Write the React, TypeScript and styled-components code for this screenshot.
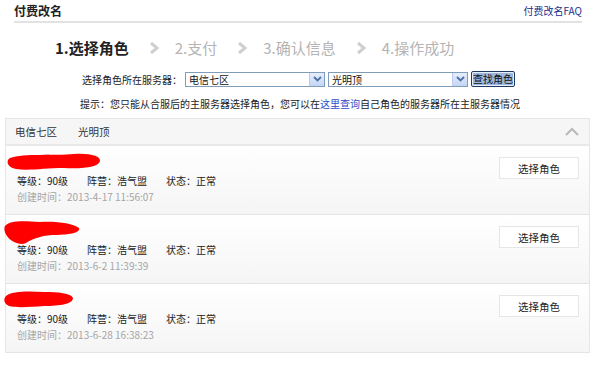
import * as React from "react";
import styled, { createGlobalStyle } from "styled-components";

const GlobalStyle = createGlobalStyle`
    body {
        margin: 0;
        background: #fff;
        font-family: "Noto Sans CJK SC", "Liberation Sans", sans-serif;
        font-size: 10px;
        color: #333;
    }
`;

interface Role {
    mask: string;
    maskWidth: number;
    maskHeight: number;
    level: string;
    camp: string;
    status: string;
    created: string;
}

const roles: Role[] = [
    {
        mask: "M6 7 C20 2 50 5 70 3 C86 2 97 5 96 10 C95 16 80 18 60 17 C40 17 25 20 12 18 C4 17 1 10 6 7 Z",
        maskWidth: 100,
        maskHeight: 22,
        level: "90级",
        camp: "浩气盟",
        status: "正常",
        created: "2013-4-17 11:56:07",
    },
    {
        mask: "M1 6 C6 0 20 1 36 2 C52 1 68 3 75 8 C77 13 64 15 48 15 C36 16 28 19 22 23 C16 26 6 21 3 16 C0 12 0 8 1 6 Z",
        maskWidth: 80,
        maskHeight: 26,
        level: "90级",
        camp: "浩气盟",
        status: "正常",
        created: "2013-6-2 11:39:39",
    },
    {
        mask: "M2 7 C8 2 24 2 40 3 C54 3 67 4 69 9 C69 15 56 17 40 17 C26 18 12 19 5 17 C0 15 -1 10 2 7 Z",
        maskWidth: 72,
        maskHeight: 22,
        level: "90级",
        camp: "浩气盟",
        status: "正常",
        created: "2013-6-28 16:38:23",
    },
];

const steps = ["1.选择角色", "2.支付", "3.确认信息", "4.操作成功"];

const DownArrow = () => (
    <svg width="9" height="6" viewBox="0 0 9 6">
        <polyline
            points="1,1 4.5,4.5 8,1"
            fill="none"
            stroke="#4d6fa8"
            strokeWidth="1.8"
        />
    </svg>
);

const App: React.FC = () => {
    return (
        <>
            <GlobalStyle />
            <Page>
                <TopBar>
                    <Title>付费改名</Title>
                    <FaqLink href="#">付费改名FAQ</FaqLink>
                </TopBar>

                <Steps>
                    {steps.map((s, i) => (
                        <React.Fragment key={s}>
                            {i > 0 && (
                                <StepArrow viewBox="0 0 10 14">
                                    <polyline
                                        points="2,2 8,7 2,12"
                                        fill="none"
                                        stroke="#cfcfcf"
                                        strokeWidth="3"
                                    />
                                </StepArrow>
                            )}
                            <Step $active={i === 0}>{s}</Step>
                        </React.Fragment>
                    ))}
                </Steps>

                <ServerRow>
                    <FieldLabel>选择角色所在服务器：</FieldLabel>
                    <SelectBox>
                        <span>电信七区</span>
                        <SelectArrow>
                            <DownArrow />
                        </SelectArrow>
                    </SelectBox>
                    <SelectBox>
                        <span>光明顶</span>
                        <SelectArrow>
                            <DownArrow />
                        </SelectArrow>
                    </SelectBox>
                    <FindButton>
                        <span>查找角色</span>
                    </FindButton>
                </ServerRow>

                <Hint>
                    提示：您只能从合服后的主服务器选择角色，您可以在
                    <a href="#">这里查询</a>
                    自己角色的服务器所在主服务器情况
                </Hint>

                <Panel>
                    <PanelHead>
                        <HeadText>
                            <span>电信七区</span>
                            <span>光明顶</span>
                        </HeadText>
                        <svg width="16" height="10" viewBox="0 0 16 10">
                            <polyline
                                points="2,8 8,2 14,8"
                                fill="none"
                                stroke="#b8b8b8"
                                strokeWidth="2"
                            />
                        </svg>
                    </PanelHead>
                    {roles.map((r) => (
                        <RoleRow key={r.created}>
                            <RoleInfo>
                                <NameMask>
                                    <svg
                                        width={r.maskWidth}
                                        height={r.maskHeight}
                                        viewBox={`0 0 ${r.maskWidth} ${r.maskHeight}`}
                                    >
                                        <path d={r.mask} fill="#ff0000" />
                                    </svg>
                                </NameMask>
                                <InfoLine>
                                    <span>等级：{r.level}</span>
                                    <span>阵营：{r.camp}</span>
                                    <span>状态：{r.status}</span>
                                </InfoLine>
                                <TimeLine>创建时间：{r.created}</TimeLine>
                            </RoleInfo>
                            <PickButton>选择角色</PickButton>
                        </RoleRow>
                    ))}
                </Panel>
            </Page>
        </>
    );
};

const Page = styled.div`
    width: 600px;
    height: 387px;
    overflow: hidden;
    box-sizing: border-box;
`;

const TopBar = styled.div`
    display: flex;
    justify-content: space-between;
    align-items: center;
    margin: 0 18px 0 14px;
    height: 21px;
    border-bottom: 2px solid #e2e2e2;
`;

const Title = styled.div`
    font-size: 12px;
    font-weight: bold;
    color: #222;
`;

const FaqLink = styled.a`
    font-size: 10px;
    color: #1a2f8c;
    text-decoration: none;
`;

const Steps = styled.div`
    display: flex;
    align-items: center;
    padding-left: 55px;
    margin-top: 13px;
    height: 24px;
`;

const Step = styled.div<{ $active?: boolean }>`
    font-size: 15px;
    line-height: 24px;
    font-weight: ${(p) => (p.$active ? "bold" : "normal")};
    color: ${(p) => (p.$active ? "#222" : "#b4b4b4")};
`;

const StepArrow = styled.svg`
    width: 10px;
    height: 14px;
    margin: 0 16px 0 20px;
`;

const ServerRow = styled.div`
    display: flex;
    align-items: center;
    padding-left: 82px;
    margin-top: 11px;
    height: 16px;
`;

const FieldLabel = styled.span`
    margin-right: 3px;
    color: #222;
`;

const SelectBox = styled.div`
    display: flex;
    justify-content: space-between;
    align-items: center;
    width: 140px;
    height: 15px;
    box-sizing: border-box;
    border: 1px solid #7f9db9;
    background: #fff;
    margin-right: 3px;
    padding-left: 3px;
    color: #111;
    line-height: 13px;
`;

const SelectArrow = styled.div`
    width: 14px;
    height: 13px;
    display: flex;
    align-items: center;
    justify-content: center;
    background: linear-gradient(#e6eefc, #c4d6f5);
    border-left: 1px solid #b8cbeb;
`;

const FindButton = styled.div`
    width: 44px;
    height: 16px;
    box-sizing: border-box;
    border: 1px solid #1e3a62;
    border-radius: 2px;
    background: #e8eef7;
    display: flex;
    align-items: center;
    justify-content: center;
    span {
        background: #9cb6dc;
        color: #111;
        line-height: 12px;
        font-size: 10px;
    }
`;

const Hint = styled.div`
    padding-left: 80px;
    margin-top: 10px;
    line-height: 14px;
    color: #222;
    a {
        color: #2a4cc8;
        text-decoration: none;
    }
`;

const Panel = styled.div`
    margin: 7px 10px 0 5px;
    border: 1px solid #e6e6e6;
    border-bottom: none;
`;

const PanelHead = styled.div`
    display: flex;
    justify-content: space-between;
    align-items: center;
    height: 25px;
    padding: 0 9px 0 9px;
    background: #f6f6f6;
    border-bottom: 2px solid #e9e9e9;
`;

const HeadText = styled.div`
    display: flex;
    gap: 21px;
    color: #333;
    font-size: 10.5px;
`;

const RoleRow = styled.div`
    display: flex;
    justify-content: space-between;
    align-items: flex-start;
    height: 68px;
    padding: 0 10px 0 10px;
    background: linear-gradient(#fff, #f5f5f5);
    border-bottom: 1px solid #e4e4e4;
`;

const RoleInfo = styled.div`
    display: flex;
    flex-direction: column;
    padding-top: 5px;
`;

const NameMask = styled.div`
    height: 22px;
    margin-left: -12px;
    svg {
        overflow: visible;
        display: block;
    }
`;

const InfoLine = styled.div`
    display: flex;
    gap: 19px;
    line-height: 16px;
    color: #222;
    padding-left: 1px;
`;

const TimeLine = styled.div`
    line-height: 16px;
    color: #a5a5a5;
    padding-left: 1px;
`;

const PickButton = styled.button`
    margin-top: 11px;
    width: 80px;
    height: 22px;
    border: 1px solid #e6e6e6;
    background: #fff;
    font-family: "Noto Sans CJK SC", "Liberation Sans", sans-serif;
    font-size: 10.5px;
    color: #222;
    padding: 0;
`;

export default App;
